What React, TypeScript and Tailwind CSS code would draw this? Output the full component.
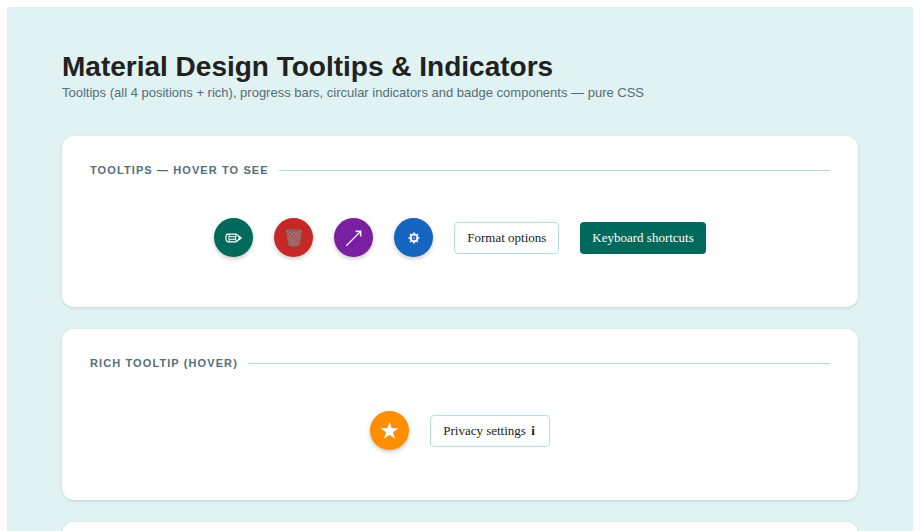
import type { ReactNode } from 'react';

function Card({ title, children }: { title?: string; children?: ReactNode }) {
  return (
    <section className="min-h-[171px] rounded-xl bg-white p-7 shadow-[0_1px_3px_rgba(0,77,64,0.16)]">
      {title && (
        <h2 className="mb-[21px] flex items-center gap-[10px] text-[11px] leading-[13px] font-bold tracking-widest text-[#546e7a] uppercase after:h-px after:flex-1 after:bg-[#b2dfdb]">
          {title}
        </h2>
      )}
      {children && <div className="flex flex-wrap items-center justify-center gap-[21px] pt-5 pb-[22px]">{children}</div>}
    </section>
  );
}

function Fab({ label, color, children }: { label: string; color: string; children: ReactNode }) {
  return (
    <button
      type="button"
      aria-label={label}
      className={`flex size-[39px] items-center justify-center rounded-full text-white shadow-[0_2px_4px_rgba(0,0,0,0.22)] ${color}`}
    >
      {children}
    </button>
  );
}

const serif = "font-['Liberation_Serif','Times_New_Roman',serif]";

function PencilIcon() {
  return (
    <svg width="17" height="10" viewBox="0 0 17 10" fill="none" stroke="currentColor" strokeWidth="1.2" strokeLinejoin="round">
      <path d="M3 1.2H11.2L16 5L11.2 8.8H3C1.6 8.8 .9 7 .9 5S1.6 1.2 3 1.2Z" />
      <path d="M4.6 1.2C3.6 3 3.6 7 4.6 8.8M4.2 3.7H11.2M4.2 6.3H11.2M11.2 1.2C10.4 3 10.4 7 11.2 8.8" strokeWidth="1" />
      <path d="M14 3.6L16 5L14 6.4Z" fill="currentColor" />
    </svg>
  );
}

function TrashIcon() {
  return (
    <svg width="18" height="18" viewBox="0 0 18 18" fill="none">
      <path d="M1.5 2L3.6 16.2C5 17.5 13 17.5 14.4 16.2L16.5 2Z" fill="#a94c50" />
      <path
        d="M2 4L13.5 16.5M4.5 2.5L14.5 13.5M8 2.5L15.3 10.5M11.5 2.5L16 7.2M2.5 8L10.5 17M3 12L7.5 17M16 4L4.5 16.5M13.5 2.5L3.5 13.5M10 2.5L2.7 10.5M6.5 2.5L2 7.2M15.5 8L7.5 17M15 12L10.5 17"
        stroke="#a49295"
        strokeWidth=".6"
      />
      <path d="M1.5 2L3.6 16.2C5 17.5 13 17.5 14.4 16.2L16.5 2" stroke="#76696e" strokeWidth="1" />
      <ellipse cx="9" cy="2" rx="8" ry="1.1" fill="#715558" stroke="#8b8488" strokeWidth=".8" />
    </svg>
  );
}

function ArrowIcon() {
  return (
    <svg width="18" height="18" viewBox="0 0 18 18" fill="none" stroke="currentColor" strokeWidth="1.3">
      <path d="M1.3 16.7L15.6 2.4" />
      <path d="M10.4 1.8H16.2V7.6L15 6.6V3.8L14.2 3H11.4Z" fill="currentColor" strokeWidth=".4" />
    </svg>
  );
}

function GearIcon() {
  return (
    <svg width="12" height="12" viewBox="0 0 12 12" fill="none" stroke="currentColor">
      <circle cx="6" cy="6" r="3.4" strokeWidth="2" />
      <circle cx="6" cy="6" r=".7" fill="currentColor" stroke="none" />
      <path d="M6 .5V2M6 10V11.5M.5 6H2M10 6H11.5M2.1 2.1L3.2 3.2M8.8 8.8L9.9 9.9M9.9 2.1L8.8 3.2M3.2 8.8L2.1 9.9" strokeWidth="1.7" />
    </svg>
  );
}

function StarIcon() {
  return (
    <svg width="19" height="19" viewBox="0 0 18 18" fill="currentColor">
      <path d="M9 .8L11 6.9H17.4L12.2 10.7L14.2 16.8L9 13L3.8 16.8L5.8 10.7L.6 6.9H7Z" />
    </svg>
  );
}

export default function App() {
  return (
    <div className="h-screen overflow-hidden bg-white px-[7px] pt-[7px] font-['Liberation_Sans',Arial,sans-serif]">
      <main className="min-h-full bg-[#e0f2f1] px-[55px] pt-[43px]">
        <header className="mb-[34px]">
          <h1 className="text-[28px] leading-[34px] font-bold text-[#212121]">Material Design Tooltips &amp; Indicators</h1>
          <p className="text-[13px] leading-[18px] text-[#546e7a]">
            Tooltips (all 4 positions + rich), progress bars, circular indicators and badge components — pure CSS
          </p>
        </header>
        <div className="flex flex-col gap-[22px]">
          <Card title="Tooltips — hover to see">
            <Fab label="Edit" color="bg-[#00695c]"><PencilIcon /></Fab>
            <Fab label="Delete" color="bg-[#c62828]"><TrashIcon /></Fab>
            <Fab label="Share" color="bg-[#7b1fa2]"><ArrowIcon /></Fab>
            <Fab label="Settings" color="bg-[#1565c0]"><GearIcon /></Fab>
            <button type="button" className={`rounded-[4px] border border-[#b2dfdb] bg-white px-3 py-[7px] text-[13px] leading-4 text-[#212121] ${serif}`}>
              Format options
            </button>
            <button type="button" className={`rounded-[4px] bg-[#00695c] px-3 py-2 text-[13px] leading-4 text-white ${serif}`}>
              Keyboard shortcuts
            </button>
          </Card>
          <Card title="Rich tooltip (hover)">
            <Fab label="Favourite" color="bg-[#ff8f00]"><StarIcon /></Fab>
            <button type="button" className={`rounded-[4px] border border-[#b2dfdb] bg-white px-3 py-[7px] text-[13px] leading-4 text-[#212121] ${serif}`}>
              Privacy settings <span className="mx-[2px] font-bold">i</span>
            </button>
          </Card>
          <Card />
        </div>
      </main>
    </div>
  );
}
